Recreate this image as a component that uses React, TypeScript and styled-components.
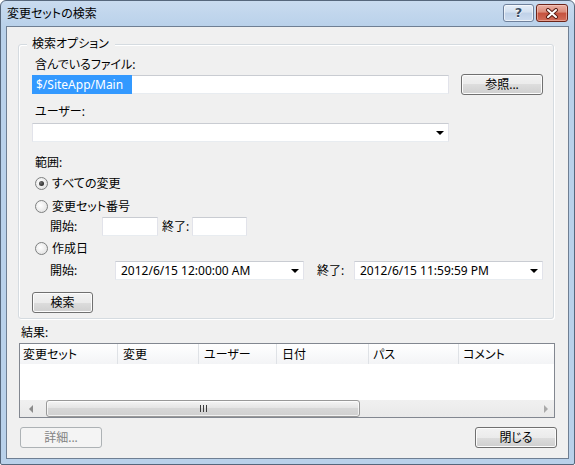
import React from "react";
import styled, { createGlobalStyle } from "styled-components";

const GlobalStyle = createGlobalStyle`
  html, body {
    margin: 0;
    padding: 0;
    background: #ffffff;
  }
  body {
    font-family: "Noto Sans", "Noto Sans CJK JP", sans-serif;
    font-size: 12px;
    font-feature-settings: "palt";
    color: #000000;
  }
  * {
    box-sizing: border-box;
  }
`;

const Window = styled.div`
  width: 575px;
  height: 465px;
  display: flex;
  flex-direction: column;
  padding: 0 5px 5px;
  border: 1px solid #56677c;
  border-radius: 6px 6px 2px 2px;
  background: linear-gradient(#c9dbef, #b9d1ea 26px);
`;

const TitleBar = styled.div`
  height: 25px;
  display: flex;
  align-items: flex-start;
`;

const Caption = styled.div`
  margin: 6px 0 0 1px;
  line-height: 14px;
  color: #000;
`;

const CaptionButtons = styled.div`
  margin: 3px 1px 0 auto;
  display: flex;
  gap: 2px;
`;

const HelpButton = styled.div`
  width: 31px;
  height: 18px;
  display: flex;
  align-items: center;
  justify-content: center;
  border: 1px solid #6f819c;
  border-radius: 3px;
  background: linear-gradient(#e6eef8, #d3e0f0 45%, #bfd1e8 50%, #cddcef);
  box-shadow: inset 0 0 0 1px rgba(255, 255, 255, 0.6);
  color: #3a4d63;
  font-family: "DejaVu Sans", sans-serif;
  font-weight: bold;
  font-size: 13px;
  line-height: 14px;
  text-shadow: 0 0 1px #ffffff, 0 1px 0 #ffffff;
`;

const CloseButton = styled.div`
  width: 32px;
  height: 18px;
  display: flex;
  align-items: center;
  justify-content: center;
  border: 1px solid #6c2419;
  border-radius: 3px;
  background: linear-gradient(#eab0a4, #da8a78 45%, #c5513d 50%, #d26e5a);
  box-shadow: inset 0 0 0 1px rgba(255, 220, 210, 0.45);
`;

const Client = styled.div`
  flex: 1;
  display: flex;
  flex-direction: column;
  align-items: flex-start;
  padding: 17px 0 0 11px;
  border: 1px solid #6f7f93;
  background: #f0f0f0;
`;

const GroupBox = styled.div`
  width: 536px;
  display: flex;
  flex-direction: column;
  align-items: flex-start;
  padding-bottom: 5px;
  border: 1px solid #d5dbe0;
  border-radius: 3px;
  box-shadow: inset 1px 1px 0 #ffffff, 1px 1px 0 #ffffff;
`;

const GroupTitle = styled.div`
  margin: -8px 0 0 8px;
  padding: 0 6px 0 5px;
  line-height: 14px;
  background: #f0f0f0;
`;

const GroupContent = styled.div`
  display: flex;
  flex-direction: column;
  align-items: flex-start;
  padding-left: 13px;
`;

const Label = styled.div<{ $mt: number; $ml?: number }>`
  margin-top: ${(p) => p.$mt}px;
  margin-left: ${(p) => p.$ml ?? 3}px;
  height: 14px;
  line-height: 14px;
  white-space: nowrap;
`;

const Row = styled.div<{ $mt: number; $h: number; $ml?: number }>`
  margin-top: ${(p) => p.$mt}px;
  margin-left: ${(p) => p.$ml ?? 0}px;
  height: ${(p) => p.$h}px;
  display: flex;
  align-items: center;
`;

const FieldLabel = styled.span<{ $w: number; $ml?: number }>`
  width: ${(p) => p.$w}px;
  margin-left: ${(p) => p.$ml ?? 0}px;
  flex-shrink: 0;
  line-height: 14px;
  white-space: nowrap;
`;

const TextBox = styled.div<{ $w: number }>`
  width: ${(p) => p.$w}px;
  height: 19px;
  display: flex;
  align-items: center;
  flex-shrink: 0;
  border: 1px solid;
  border-color: #c9ccd2 #e2e3ea #e8ecf0 #e2e3ea;
  background: #ffffff;
  white-space: nowrap;
`;

const Selection = styled.span`
  width: 100px;
  height: 19px;
  margin: -1px 0 0 -1px;
  padding-left: 4px;
  line-height: 19px;
  background: #3399ff;
  color: #ffffff;
`;

const ComboText = styled.span`
  flex: 1;
  padding-left: 5px;
  line-height: 14px;
`;

const DropArrow = styled.span`
  width: 0;
  height: 0;
  margin-right: 4px;
  border-left: 4px solid transparent;
  border-right: 4px solid transparent;
  border-top: 4px solid #000000;
`;

const Radio = styled.span<{ $checked?: boolean }>`
  width: 13px;
  height: 13px;
  margin: 0 4px 0 3px;
  display: flex;
  align-items: center;
  justify-content: center;
  border: 1px solid #7e8080;
  border-radius: 50%;
  background: radial-gradient(circle at 40% 40%, #ffffff, #e6e6e6 70%, #d0d0d0);

  &::after {
    content: "";
    display: ${(p) => (p.$checked ? "block" : "none")};
    width: 5px;
    height: 5px;
    border-radius: 50%;
    background: radial-gradient(circle at 35% 35%, #6f6f6f, #151515);
  }
`;

const Button = styled.button<{ $w: number; $ml?: number }>`
  width: ${(p) => p.$w}px;
  height: 21px;
  margin-left: ${(p) => p.$ml ?? 0}px;
  padding: 0;
  flex-shrink: 0;
  border: 1px solid #707070;
  border-radius: 3px;
  background: linear-gradient(#f2f2f2, #ebebeb 50%, #dddddd 50%, #cfcfcf);
  box-shadow: inset 0 0 0 1px #fcfcfc;
  font: inherit;
  font-size: 12px;
  line-height: 14px;
  color: #000000;

  &:disabled {
    border-color: #adb2b5;
    background: #f4f4f4;
    box-shadow: none;
    color: #838383;
  }
`;

const ResultsLabel = styled.div`
  margin: 7px 0 0 3px;
  line-height: 14px;
  height: 14px;
`;

const ListView = styled.div`
  width: 536px;
  height: 75px;
  margin: 3px 0 0 1px;
  display: flex;
  flex-direction: column;
  border: 1px solid #828790;
  background: #ffffff;
`;

const HeaderRow = styled.div`
  height: 20px;
  display: flex;
  background: linear-gradient(#ffffff, #f3f4f6);
`;

const HeaderCell = styled.div<{ $w?: number; $pl: number }>`
  ${(p) => (p.$w ? `width: ${p.$w}px;` : "flex: 1;")}
  flex-shrink: 0;
  padding-left: ${(p) => p.$pl}px;
  display: flex;
  align-items: center;
  border-right: 1px solid #dfe2e6;
  white-space: nowrap;

  &:last-child {
    border-right: none;
  }
`;

const ListBody = styled.div`
  flex: 1;
`;

const HScroll = styled.div`
  height: 17px;
  display: flex;
  align-items: stretch;
  background: linear-gradient(#f0f0f0, #e9e9e9);
`;

const ScrollArrow = styled.div<{ $w: number; $dir: "left" | "right" }>`
  width: ${(p) => p.$w}px;
  display: flex;
  align-items: center;
  justify-content: center;

  &::after {
    content: "";
    width: 0;
    height: 0;
    border-top: 4px solid transparent;
    border-bottom: 4px solid transparent;
    ${(p) =>
      p.$dir === "left"
        ? "border-right: 4px solid #8c8c8c;"
        : "border-left: 4px solid #a9a9a9;"}
  }
`;

const Thumb = styled.div`
  width: 314px;
  margin-left: 5px;
  display: flex;
  align-items: center;
  justify-content: center;
  border: 1px solid #999999;
  border-radius: 3px;
  background: linear-gradient(#f5f5f5, #e3e3e3 50%, #d7d7d7 50%, #d0d0d0);
  box-shadow: inset 0 0 0 1px rgba(255, 255, 255, 0.7);
`;

const Track = styled.div`
  flex: 1;
`;

const Footer = styled.div`
  width: 537px;
  margin: 9px 0 0 2px;
  display: flex;
  justify-content: space-between;
`;

const CloseIcon = () => (
  <svg width="14" height="11" viewBox="0 0 14 11">
    <path d="M3 2 L11 9 M11 2 L3 9" stroke="#5a1d14" strokeWidth="4" strokeLinecap="round" />
    <path d="M3 2 L11 9 M11 2 L3 9" stroke="#ffffff" strokeWidth="2" strokeLinecap="round" />
  </svg>
);

const Grip = () => (
  <svg width="7" height="7" viewBox="0 0 7 7">
    <path d="M0.5 0 V7 M3.5 0 V7 M6.5 0 V7" stroke="#3c3c3c" strokeWidth="1" />
  </svg>
);

const columns = [
  { title: "変更セット", w: 98, pl: 3 },
  { title: "変更", w: 81, pl: 5 },
  { title: "ユーザー", w: 78, pl: 5 },
  { title: "日付", w: 92, pl: 5 },
  { title: "パス", w: 90, pl: 4 },
  { title: "コメント", pl: 4 },
];

export default function App() {
  return (
    <>
      <GlobalStyle />
      <Window>
        <TitleBar>
          <Caption>変更セットの検索</Caption>
          <CaptionButtons>
            <HelpButton>?</HelpButton>
            <CloseButton>
              <CloseIcon />
            </CloseButton>
          </CaptionButtons>
        </TitleBar>
        <Client>
          <GroupBox>
            <GroupTitle>検索オプション</GroupTitle>
            <GroupContent>
              <Label $mt={7}>含んでいるファイル:</Label>
              <Row $mt={2} $h={21}>
                <TextBox $w={417}>
                  <Selection>$/SiteApp/Main</Selection>
                </TextBox>
                <Button $w={82} $ml={12}>参照...</Button>
              </Row>
              <Label $mt={10}>ユーザー:</Label>
              <Row $mt={4} $h={19}>
                <TextBox $w={417}>
                  <ComboText />
                  <DropArrow />
                </TextBox>
              </Row>
              <Label $mt={14}>範囲:</Label>
              <Row $mt={4} $h={18}>
                <Radio $checked />
                すべての変更
              </Row>
              <Row $mt={5} $h={18}>
                <Radio />
                変更セット番号
              </Row>
              <Row $mt={2} $h={19} $ml={18}>
                <FieldLabel $w={52}>開始:</FieldLabel>
                <TextBox $w={56} />
                <FieldLabel $w={30} $ml={4}>終了:</FieldLabel>
                <TextBox $w={55} />
              </Row>
              <Row $mt={3} $h={18}>
                <Radio />
                作成日
              </Row>
              <Row $mt={4} $h={19} $ml={18}>
                <FieldLabel $w={65}>開始:</FieldLabel>
                <TextBox $w={189}>
                  <ComboText>2012/6/15 12:00:00 AM</ComboText>
                  <DropArrow />
                </TextBox>
                <FieldLabel $w={37} $ml={13}>終了:</FieldLabel>
                <TextBox $w={189}>
                  <ComboText>2012/6/15 11:59:59 PM</ComboText>
                  <DropArrow />
                </TextBox>
              </Row>
              <Row $mt={12} $h={21}>
                <Button $w={61}>検索</Button>
              </Row>
            </GroupContent>
          </GroupBox>
          <ResultsLabel>結果:</ResultsLabel>
          <ListView>
            <HeaderRow>
              {columns.map((c) => (
                <HeaderCell key={c.title} $w={c.w} $pl={c.pl}>
                  {c.title}
                </HeaderCell>
              ))}
            </HeaderRow>
            <ListBody />
            <HScroll>
              <ScrollArrow $w={21} $dir="left" />
              <Thumb>
                <Grip />
              </Thumb>
              <Track />
              <ScrollArrow $w={17} $dir="right" />
            </HScroll>
          </ListView>
          <Footer>
            <Button $w={82} disabled>
              詳細...
            </Button>
            <Button $w={82}>閉じる</Button>
          </Footer>
        </Client>
      </Window>
    </>
  );
}
